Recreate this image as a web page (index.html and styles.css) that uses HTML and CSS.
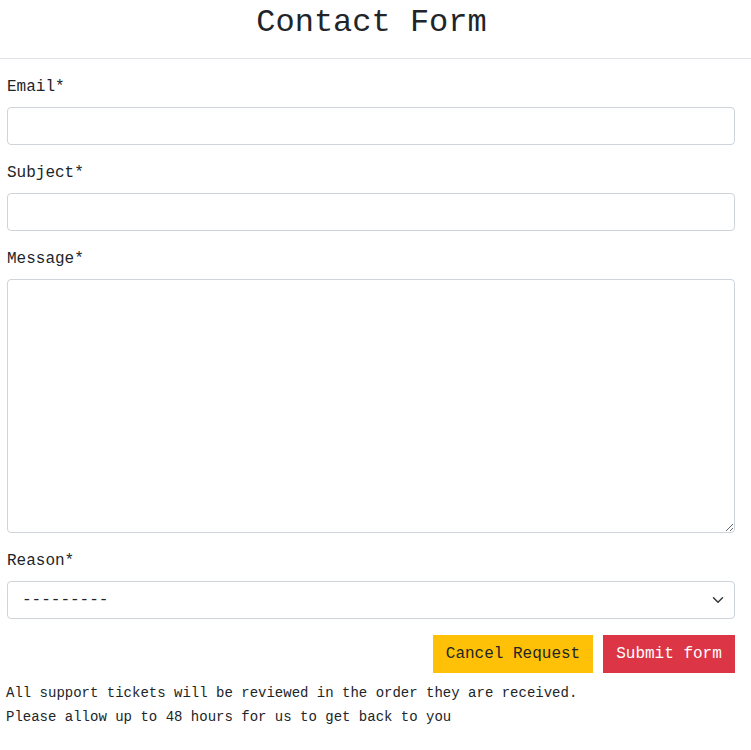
FILE: index.html
```html
<!DOCTYPE html>
<html lang="en">
<head>
<meta charset="utf-8">
<title>Contact Form</title>
<link rel="stylesheet" href="styles.css">
</head>
<body>
<header class="page-header">
  <h1 class="title">Contact Form</h1>
</header>
<form class="contact-form">
  <div class="field">
    <label class="field-label" for="email">Email*</label>
    <input class="field-input" id="email" type="email">
  </div>
  <div class="field">
    <label class="field-label" for="subject">Subject*</label>
    <input class="field-input" id="subject" type="text">
  </div>
  <div class="field">
    <label class="field-label" for="message">Message*</label>
    <textarea class="field-input field-textarea" id="message"></textarea>
  </div>
  <div class="field">
    <label class="field-label" for="reason">Reason*</label>
    <select class="field-input field-select" id="reason">
      <option>---------</option>
    </select>
  </div>
  <div class="actions">
    <button type="button" class="btn btn-cancel">Cancel Request</button>
    <button type="submit" class="btn btn-submit">Submit form</button>
  </div>
  <p class="note">All support tickets will be reviewed in the order they are received.</p>
  <p class="note">Please allow up to 48 hours for us to get back to you</p>
</form>
</body>
</html>
```

FILE: styles.css
```css
* { box-sizing: border-box; }

html, body {
  margin: 0;
  padding: 0;
  background: #fff;
}

body {
  font-family: "Liberation Mono", "Courier New", monospace;
  color: #212529;
  font-size: 16px;
  line-height: 1.5;
}

.page-header {
  border-bottom: 1px solid #dee2e6;
  padding: 4px 8px 16px 0;
  text-align: center;
}

.title {
  margin: 0;
  font-size: 32px;
  font-weight: 400;
  line-height: 1.2;
}

.contact-form {
  padding: 16px 16px 0 7px;
}

.field {
  display: flex;
  flex-direction: column;
  margin-bottom: 16px;
}

.field-label {
  display: block;
  margin-bottom: 8px;
  line-height: 24px;
}

.field-input {
  display: block;
  width: 100%;
  height: 38px;
  padding: 6px 12px;
  font-family: inherit;
  font-size: 16px;
  color: #212529;
  background: #fff;
  border: 1px solid #ced4da;
  border-radius: 4px;
  outline: none;
}

.field-textarea {
  height: 254px;
  resize: vertical;
}

.field-select {
  appearance: none;
  -webkit-appearance: none;
  padding-left: 14px;
  background-image: url("data:image/svg+xml,%3csvg xmlns='http://www.w3.org/2000/svg' viewBox='0 0 16 16'%3e%3cpath fill='none' stroke='%23343a40' stroke-linecap='round' stroke-linejoin='round' stroke-width='2' d='M2 5l6 6 6-6'/%3e%3c/svg%3e");
  background-repeat: no-repeat;
  background-position: right 8px center;
  background-size: 16px 12px;
}

.actions {
  display: flex;
  justify-content: flex-end;
  gap: 10px;
  margin-bottom: 8px;
}

.btn {
  height: 38px;
  padding: 0;
  border: none;
  border-radius: 0;
  font-family: inherit;
  font-size: 16px;
  white-space: nowrap;
  cursor: pointer;
}

.btn-cancel {
  background: #ffc107;
  color: #212529;
  width: 160px;
}

.btn-submit {
  background: #dc3545;
  color: #fff;
  width: 132px;
}

.note {
  margin: 0;
  font-size: 14px;
  line-height: 24px;
  margin-left: -1px;
}
```
